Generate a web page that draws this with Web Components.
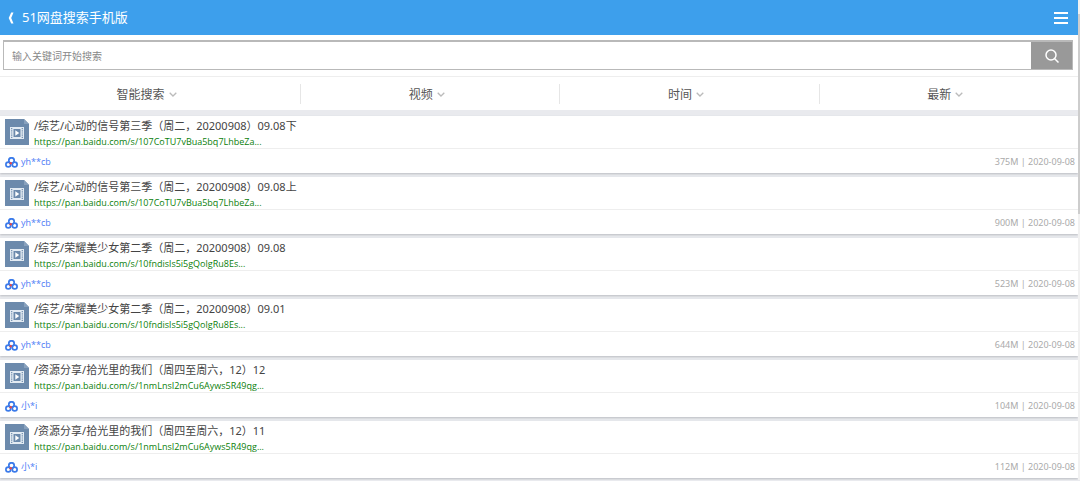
<!DOCTYPE html>
<html lang="zh-CN">
<head>
<meta charset="utf-8">
<meta name="viewport" content="width=device-width, initial-scale=1">
<title>51网盘搜索手机版</title>
<style>
html { background: #e9eaee; }
body { display: grid; grid-template-columns: minmax(0, 1fr) 2px; margin: 0; font-family: "Noto Sans", "Noto Sans CJK SC", sans-serif; color: #444; }
</style>
</head>
<body>
<pan-app></pan-app>
<pan-track></pan-track>

<template id="t-track">
<style>
:host { display: block; padding-top: 14px; background: #f1f1f1; }
div { height: 200px; background: #cdcdcd; }
</style>
<div></div>
</template>

<template id="t-header">
<style>
:host { display: flex; align-items: center; justify-content: space-between; height: 35px; box-sizing: border-box; padding: 0 10px 0 8px; background: #3d9fec; color: #fff; }
a { display: flex; align-items: center; gap: 8px; color: inherit; text-decoration: none; }
h1 { margin: 0; padding-bottom: 2px; font-size: 13px; line-height: 20px; font-weight: 400; }
button { display: flex; padding: 0; border: 0; background: none; color: inherit; }
svg { display: block; }
</style>
<a href="#"><svg width="6" height="12" viewBox="0 0 6 12" fill="currentColor"><path d="M3.200 .5H5.500L3.200 6l2.300 5.500H3.200L.7 6z"/></svg><h1><slot></slot></h1></a>
<button type="button" aria-label="菜单"><svg width="14" height="12" viewBox="0 0 14 12" fill="currentColor"><path d="M0 0h14v2H0zM0 5h14v2H0zM0 10h14v2H0z"/></svg></button>
</template>

<template id="t-search">
<style>
:host { display: block; padding: 5px 5px 6px 3px; background: #fff; }
form { display: flex; height: 30px; box-sizing: border-box; border: 1px solid #b9b9b9; border-top-width: 2px; }
input { flex: 1; min-width: 0; border: 0; padding: 0 8px; margin: 0; outline: 0; background: #fff; color: #444; font: 10px/16px "Noto Sans CJK SC", sans-serif; }
input::placeholder { color: #888; opacity: 1; }
button { display: flex; align-items: center; justify-content: center; width: 41px; padding: 0; border: 0; background: #999; color: #fff; }
</style>
<form role="search"><input type="text" aria-label="搜索" placeholder="输入关键词开始搜索"><button type="button" aria-label="搜索"><svg width="14" height="14" viewBox="0 0 14 14" fill="none" stroke="currentColor" stroke-width="1.500"><circle cx="6" cy="6" r="5"/><path d="M9.500 9.500l4 4"/></svg></button></form>
</template>

<template id="t-filters">
<style>
:host { display: grid; grid-template-columns: 22fr 19fr 19fr 19fr; height: 34px; box-sizing: border-box; align-items: center; border-top: 1px solid #eee; background: #fff; }
</style>
<slot></slot>
</template>

<template id="t-filter">
<style>
:host { display: block; border-left: 1px solid #e6e6e6; }
:host(:first-child) { border-left: 0; }
button { display: flex; align-items: center; justify-content: center; gap: 4px; width: 100%; height: 20px; padding: 0 7px 0 0; border: 0; background: none; color: #555; font: 12px/20px "Noto Sans CJK SC", sans-serif; }
svg { margin-top: 1px; }
</style>
<button type="button"><slot></slot><svg width="8" height="5" viewBox="0 0 8 5" fill="none" stroke="#bbb" stroke-width="1.300"><path d="M.7.700L4 4 7.300.700"/></svg></button>
</template>

<template id="t-result">
<style>
:host { display: block; background: #fff; box-shadow: 0 1px 2px #bbbdc2; }
.file { display: flex; gap: 5px; height: 33px; box-sizing: border-box; padding: 3px 5px 0; border-bottom: 1px solid #eee; }
.file > svg { flex: none; }
.text { min-width: 0; }
h2 { margin: 0; font-size: 11px; line-height: 14px; font-weight: 400; color: #444; }
a { color: inherit; text-decoration: none; }
.url { display: block; font: 9px/17px "Open Sans", "Noto Sans CJK SC", sans-serif; color: #0b800b; }
.meta { display: flex; align-items: center; justify-content: space-between; height: 24px; box-sizing: border-box; padding: 1px 3px 0 5px; font-size: 9px; line-height: 16px; color: #aaa; }
.user { display: flex; align-items: center; gap: 3px; color: #4c7cf5; font-family: "Open Sans", "Noto Sans CJK SC", sans-serif; }
.user svg { margin-top: 2px; }
</style>
<div class="file">
<svg width="24" height="26" viewBox="0 0 24 26"><path d="M0 0h19l5 5v21H0z" fill="#6c8aac"/><path d="M19 0v5h5z" fill="#88a1bd"/><path d="M5 8h14v12H5z" fill="#e3ebf3"/><path d="M8.500 10h7v8h-7z" fill="#6c8aac"/><path d="M6.700 9v10M17.300 9v10" stroke="#6c8aac" stroke-width="1.200" stroke-dasharray="1.200 1"/><path d="M10.300 11.300l4 2.700-4 2.700z" fill="#fff"/></svg>
<div class="text"><h2><a href="#" class="title"></a></h2><a href="#" class="url"></a></div>
</div>
<div class="meta"><a href="#" class="user"><svg width="13" height="11" viewBox="0 0 13 11" fill="none" stroke="#3b7bea" stroke-width="1.700"><circle cx="6.500" cy="3.500" r="2.700"/><circle cx="3.300" cy="7.500" r="2.400"/><circle cx="9.700" cy="7.500" r="2.400"/><circle cx="5.700" cy="6.200" r="1.200" fill="#e5484d" stroke="none"/></svg><span class="name"></span></a><span class="info"></span></div>
</template>

<template id="t-app">
<style>
:host { display: block; }
main { display: grid; gap: 4px; padding: 6px 0 2px; overflow: hidden; }
</style>
<pan-header>51网盘搜索手机版</pan-header>
<pan-search></pan-search>
<pan-filters><pan-filter>智能搜索</pan-filter><pan-filter>视频</pan-filter><pan-filter>时间</pan-filter><pan-filter>最新</pan-filter></pan-filters>
<main></main>
</template>

<script>
class Base extends HTMLElement {
  constructor() {
    super();
    this.attachShadow({ mode: "open" }).append(document.getElementById(this.constructor.template).content.cloneNode(true));
  }
}
customElements.define("pan-track", class extends Base { static template = "t-track"; });
customElements.define("pan-header", class extends Base { static template = "t-header"; });
customElements.define("pan-search", class extends Base { static template = "t-search"; });
customElements.define("pan-filters", class extends Base { static template = "t-filters"; });
customElements.define("pan-filter", class extends Base { static template = "t-filter"; });
customElements.define("pan-result", class extends Base {
  static template = "t-result";
  set data([title, url, name, size]) {
    const values = { title, url, name, info: size + " | 2020-09-08" };
    for (const key in values) this.shadowRoot.querySelector("." + key).textContent = values[key];
  }
});
const URLS = [
  "https://pan.baidu.com/s/107CoTU7vBua5bq7LhbeZa...",
  "https://pan.baidu.com/s/10fndisls5i5gQolgRu8Es...",
  "https://pan.baidu.com/s/1nmLnsI2mCu6Ayws5R49qg..."
];
const RESULTS = [
  ["/综艺/心动的信号第三季（周二，20200908）09.08下", URLS[0], "yh**cb", "375M"],
  ["/综艺/心动的信号第三季（周二，20200908）09.08上", URLS[0], "yh**cb", "900M"],
  ["/综艺/荣耀美少女第二季（周二，20200908）09.08", URLS[1], "yh**cb", "523M"],
  ["/综艺/荣耀美少女第二季（周二，20200908）09.01", URLS[1], "yh**cb", "644M"],
  ["/资源分享/拾光里的我们（周四至周六，12）12", URLS[2], "小*i", "104M"],
  ["/资源分享/拾光里的我们（周四至周六，12）11", URLS[2], "小*i", "112M"]
];
customElements.define("pan-app", class extends Base {
  static template = "t-app";
  connectedCallback() {
    const main = this.shadowRoot.querySelector("main");
    for (const row of RESULTS) {
      const item = document.createElement("pan-result");
      item.data = row;
      main.append(item);
    }
  }
});
</script>
</body>
</html>
